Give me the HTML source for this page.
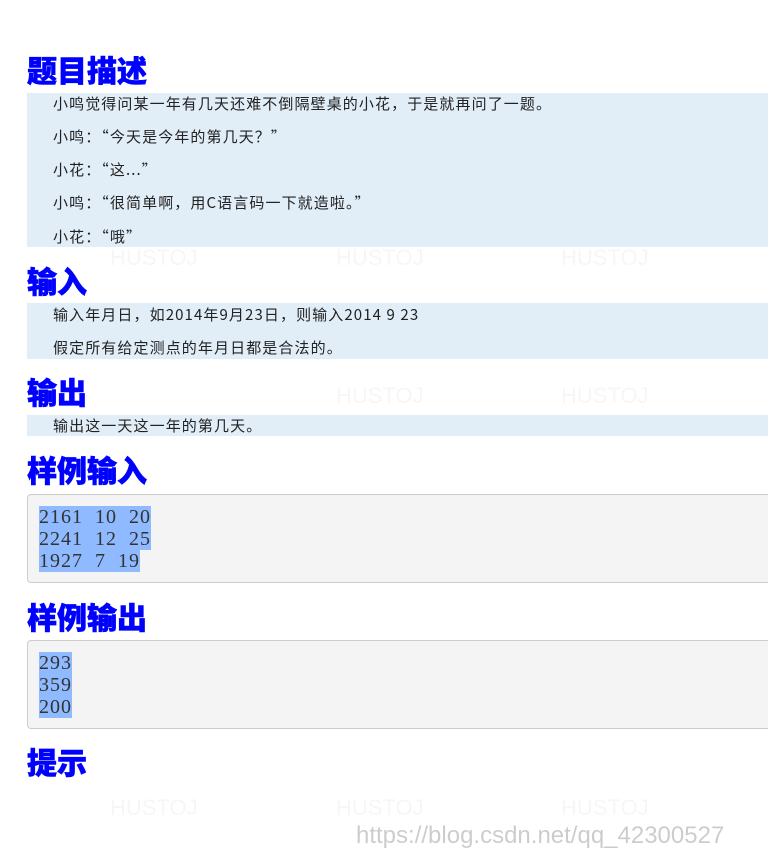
<!DOCTYPE html>
<html><head><meta charset="utf-8"><style>
body{margin:0;width:768px;height:860px;background:#fff;position:relative;overflow:hidden;font-family:"Liberation Sans","Noto Sans CJK SC",sans-serif}
.h{position:absolute;left:27px;font-family:"Noto Sans CJK SC",sans-serif;font-size:30px;font-weight:900;color:#0000ff;line-height:34px;margin:0;-webkit-text-stroke:0.6px #0000ff}
.bg{position:absolute;left:27px;right:0;background:#e1eef8}
.t{position:absolute;left:53px;font-family:"Noto Sans CJK SC","Liberation Sans",sans-serif;font-size:15px;letter-spacing:1.1px;color:#222;line-height:20px;white-space:nowrap}
.pre{position:absolute;left:27px;width:750px;background:#f4f4f4;border:1px solid #ccc;border-radius:4px;box-sizing:border-box}
.pre div{position:absolute;left:11px;top:11px;font-family:"Liberation Serif",serif;font-size:20px;line-height:22px;color:#333;letter-spacing:1px;word-spacing:6px}
.pre span{background:#8fbaff}
.wm{position:absolute;color:rgba(0,0,0,0.035);font-size:22px;white-space:nowrap}
</style></head><body>
<div class="wm" style="left:110px;top:245px">HUSTOJ</div>
<div class="wm" style="left:336px;top:245px">HUSTOJ</div>
<div class="wm" style="left:561px;top:245px">HUSTOJ</div>
<div class="wm" style="left:336px;top:383px">HUSTOJ</div>
<div class="wm" style="left:561px;top:383px">HUSTOJ</div>
<div class="wm" style="left:110px;top:795px">HUSTOJ</div>
<div class="wm" style="left:336px;top:795px">HUSTOJ</div>
<div class="wm" style="left:561px;top:795px">HUSTOJ</div>

<div class="h" style="top:52px">题目描述</div>
<div class="bg" style="top:93px;height:154px"></div>
<div class="t" style="top:94px">小鸣觉得问某一年有几天还难不倒隔壁桌的小花，于是就再问了一题。</div>
<div class="t" style="top:127px">小鸣：“今天是今年的第几天？”</div>
<div class="t" style="top:160px">小花：“这...”</div>
<div class="t" style="top:193px">小鸣：“很简单啊，用C语言码一下就造啦。”</div>
<div class="t" style="top:227px">小花：“哦”</div>

<div class="h" style="top:263px">输入</div>
<div class="bg" style="top:303px;height:56px"></div>
<div class="t" style="top:305px">输入年月日，如2014年9月23日，则输入2014 9 23</div>
<div class="t" style="top:338px">假定所有给定测点的年月日都是合法的。</div>

<div class="h" style="top:374px">输出</div>
<div class="bg" style="top:415px;height:21px"></div>
<div class="t" style="top:416px">输出这一天这一年的第几天。</div>

<div class="h" style="top:452px">样例输入</div>
<div class="pre" style="top:494px;height:89px"><div><span>2161 10 20</span><br><span>2241 12 25</span><br><span>1927 7 19</span></div></div>

<div class="h" style="top:599px">样例输出</div>
<div class="pre" style="top:640px;height:89px"><div><span>293</span><br><span>359</span><br><span>200</span></div></div>

<div class="h" style="top:744px">提示</div>
<div style="position:absolute;left:356px;top:822px;font-size:24px;color:rgba(0,0,0,0.2)">https://blog.csdn.net/qq_42300527</div>
</body></html>
